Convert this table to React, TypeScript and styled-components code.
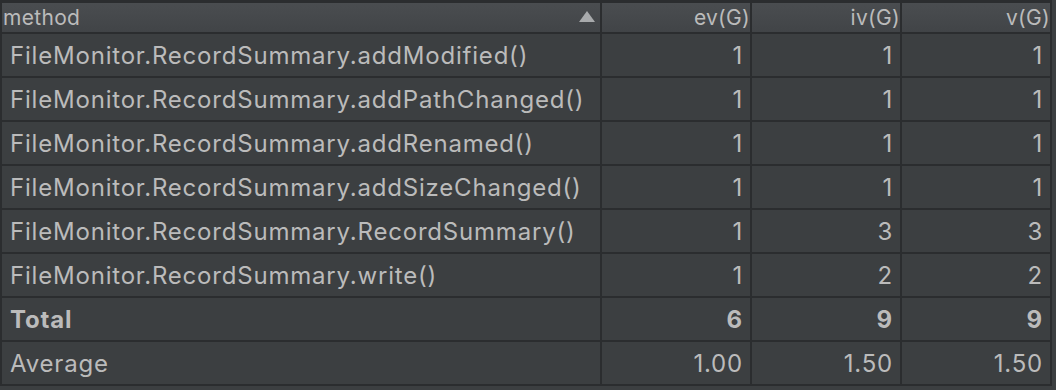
import React from 'react';
import styled, { createGlobalStyle } from 'styled-components';

interface MetricRow {
  method: string;
  ev: string;
  iv: string;
  v: string;
  bold?: boolean;
}

const rows: MetricRow[] = [
  { method: 'FileMonitor.RecordSummary.addModified()', ev: '1', iv: '1', v: '1' },
  { method: 'FileMonitor.RecordSummary.addPathChanged()', ev: '1', iv: '1', v: '1' },
  { method: 'FileMonitor.RecordSummary.addRenamed()', ev: '1', iv: '1', v: '1' },
  { method: 'FileMonitor.RecordSummary.addSizeChanged()', ev: '1', iv: '1', v: '1' },
  { method: 'FileMonitor.RecordSummary.RecordSummary()', ev: '1', iv: '3', v: '3' },
  { method: 'FileMonitor.RecordSummary.write()', ev: '1', iv: '2', v: '2' },
  { method: 'Total', ev: '6', iv: '9', v: '9', bold: true },
  { method: 'Average', ev: '1.00', iv: '1.50', v: '1.50' },
];

const GlobalStyle = createGlobalStyle`
  html, body {
    margin: 0;
    padding: 0;
    background: #3c3f41;
  }
  body {
    font-family: Inter, "Liberation Sans", sans-serif;
    color: #bbbbbb;
  }
`;

const App = () => {
  return (
    <>
      <GlobalStyle />
      <Grid>
        <HeadCell>
          <span>method</span>
          <SortArrow width="16" height="11" viewBox="0 0 16 11">
            <polygon points="8,0 16,11 0,11" fill="#a8aaac" />
          </SortArrow>
        </HeadCell>
        <HeadCell $right>ev(G)</HeadCell>
        <HeadCell $right>iv(G)</HeadCell>
        <HeadCell $right>v(G)</HeadCell>
        {rows.map((row) => (
          <React.Fragment key={row.method}>
            <Cell $bold={row.bold}>{row.method}</Cell>
            <Cell $right $bold={row.bold}>{row.ev}</Cell>
            <Cell $right $bold={row.bold}>{row.iv}</Cell>
            <Cell $right $bold={row.bold}>{row.v}</Cell>
          </React.Fragment>
        ))}
      </Grid>
    </>
  );
};

export default App;

const Grid = styled.div`
  display: grid;
  grid-template-columns: 598px 148px 148px 148px;
  grid-template-rows: 29px repeat(8, 42px);
  gap: 2px;
  width: fit-content;
  padding: 3px 2px 2px 2px;
  background: #2b2d2f;
`;

const HeadCell = styled.div<{ $right?: boolean }>`
  display: flex;
  align-items: center;
  justify-content: ${(p) => (p.$right ? 'flex-end' : 'space-between')};
  padding: ${(p) => (p.$right ? '0 0 0 1px' : '0 1px')};
  background: linear-gradient(#4a4d50, #414447);
  font-size: 21px;
  letter-spacing: 0.3px;
  line-height: 1;
  color: #bbbbbb;
  box-sizing: border-box;
`;

const SortArrow = styled.svg`
  margin-right: 4px;
  margin-top: -2px;
`;

const Cell = styled.div<{ $right?: boolean; $bold?: boolean }>`
  display: flex;
  align-items: center;
  justify-content: ${(p) => (p.$right ? 'flex-end' : 'flex-start')};
  padding: ${(p) => (p.$right ? '0 7px 0 0' : '0 0 0 8px')};
  background: #3c3f41;
  font-size: 24px;
  letter-spacing: 0.8px;
  font-weight: ${(p) => (p.$bold ? 700 : 400)};
  white-space: nowrap;
`;
